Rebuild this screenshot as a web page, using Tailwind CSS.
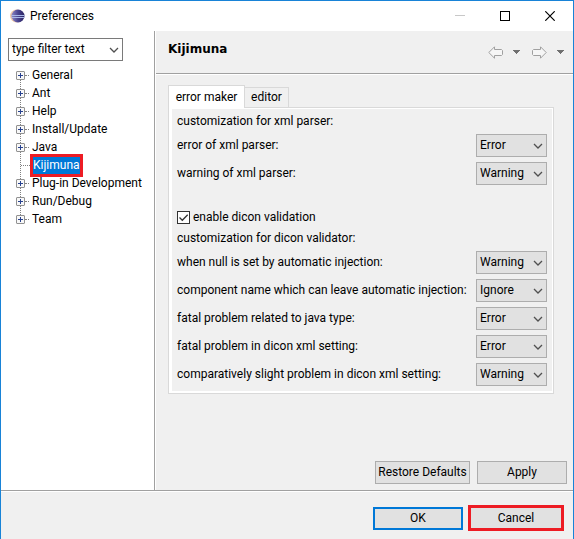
<!DOCTYPE html>
<html lang="en">
<head>
<meta charset="utf-8">
<meta name="viewport" content="width=device-width, initial-scale=1">
<title>Preferences</title>
<script src="https://cdn.jsdelivr.net/npm/@tailwindcss/browser@4"></script>
</head>
<body class="min-h-screen flex flex-col border-x border-t border-[#1883d7] bg-[#f0f0f0] font-['Roboto','Noto_Sans',sans-serif] text-[12px] leading-[15px] text-black">
<svg class="hidden">
  <symbol id="chevron" viewBox="0 0 10 6"><path d="M1 1l4 4 4-4" fill="none" stroke="#505050" stroke-width="1.3"/></symbol>
  <symbol id="plus" viewBox="0 0 9 9"><rect x=".5" y=".5" width="8" height="8" rx=".5" fill="#f8f8f8" stroke="#919191"/><path d="M2 4.5h5M4.5 2v5" stroke="#27418f"/></symbol>
  <symbol id="arrow" viewBox="0 0 15 13"><path d="M.8 6.5L6.500 .8V3.500H13.500L14.500 4.500V8.500L13.500 9.500H6.500V12.200Z" fill="#f6f6f6" stroke="#a0a0a0"/></symbol>
  <symbol id="caret" viewBox="0 0 7 4"><path d="M0 0h7v1H6v1H5v1H4v1H3V3H2V2H1V1H0z" fill="#707070"/></symbol>
</svg>

<header class="flex h-[30px] items-center bg-white pl-[9px]">
  <svg class="size-[15px] shrink-0" viewBox="0 0 15 15">
    <defs><linearGradient id="globe" x1="0" x2="1"><stop offset="0" stop-color="#8c86c4"/><stop offset=".5" stop-color="#4a4490"/><stop offset="1" stop-color="#2c2460"/></linearGradient></defs>
    <circle cx="6.500" cy="7" r="6.500" fill="#f0c8a8"/>
    <circle cx="8" cy="7" r="6.500" fill="url(#globe)"/>
    <path d="M1.500 6.500h13M1.500 8.500h13" stroke="#a8b8e8"/>
  </svg>
  <h1 class="ml-[5px] flex-1">Preferences</h1>
  <button type="button" aria-label="Minimize" class="flex w-[45px] justify-center"><svg class="size-[10px]" viewBox="0 0 10 10"><path d="M0 4.500h10" stroke="#c8c8c8"/></svg></button>
  <button type="button" aria-label="Maximize" class="flex w-[45px] justify-center"><svg class="size-[10px]" viewBox="0 0 10 10"><rect x=".5" y=".5" width="9" height="9" fill="none" stroke="#000"/></svg></button>
  <button type="button" aria-label="Close" class="flex w-[46px] justify-center"><svg class="size-[10px]" viewBox="0 0 10 10"><path d="M.3.3l9.400 9.400M9.700.3L.3 9.700" stroke="#000" stroke-width="1.200"/></svg></button>
</header>

<div class="flex flex-1 border-b border-[#a0a0a0]">
  <nav class="w-[153px] shrink-0 bg-white pt-[7px] pl-[7px]">
    <div class="flex h-[23px] w-[115px] items-center border border-[#7a7a7a]">
      <input type="text" aria-label="Filter" value="type filter text" class="min-w-0 flex-1 bg-transparent pl-[3px] outline-none">
      <button type="button" aria-label="Show filters" class="px-[3px]"><svg class="h-[6px] w-[10px]"><use href="#chevron"/></svg></button>
    </div>
    <ul class="relative mt-[5px] pl-[8px] before:absolute before:top-[10px] before:bottom-[9px] before:left-[12px] before:border-l before:border-dotted before:border-[#808080]">
      <li class="flex h-[18px] items-center"><svg class="relative size-[9px]"><use href="#plus"/></svg><i class="mr-[3px] w-[4px] border-t border-dotted border-[#808080]"></i><a href="#">General</a></li>
      <li class="flex h-[18px] items-center"><svg class="relative size-[9px]"><use href="#plus"/></svg><i class="mr-[3px] w-[4px] border-t border-dotted border-[#808080]"></i><a href="#">Ant</a></li>
      <li class="flex h-[18px] items-center"><svg class="relative size-[9px]"><use href="#plus"/></svg><i class="mr-[3px] w-[4px] border-t border-dotted border-[#808080]"></i><a href="#">Help</a></li>
      <li class="flex h-[18px] items-center"><svg class="relative size-[9px]"><use href="#plus"/></svg><i class="mr-[3px] w-[4px] border-t border-dotted border-[#808080]"></i><a href="#">Install/Update</a></li>
      <li class="flex h-[18px] items-center"><svg class="relative size-[9px]"><use href="#plus"/></svg><i class="mr-[3px] w-[4px] border-t border-dotted border-[#808080]"></i><a href="#">Java</a></li>
      <li class="flex h-[18px] items-center"><i class="ml-[5px] w-[9px] border-t border-dotted border-[#808080]"></i><a href="#" aria-current="page" class="relative border-3 border-[#ed1c24] bg-[#0078d7] py-px text-white">Kijimuna</a></li>
      <li class="flex h-[18px] items-center"><svg class="relative size-[9px]"><use href="#plus"/></svg><i class="mr-[3px] w-[4px] border-t border-dotted border-[#808080]"></i><a href="#" class="whitespace-nowrap">Plug-in Development</a></li>
      <li class="flex h-[18px] items-center"><svg class="relative size-[9px]"><use href="#plus"/></svg><i class="mr-[3px] w-[4px] border-t border-dotted border-[#808080]"></i><a href="#">Run/Debug</a></li>
      <li class="flex h-[18px] items-center"><svg class="relative size-[9px]"><use href="#plus"/></svg><i class="mr-[3px] w-[4px] border-t border-dotted border-[#808080]"></i><a href="#">Team</a></li>
    </ul>
  </nav>

  <main class="flex min-w-0 flex-1 flex-col border-l border-[#a0a0a0]">
    <div class="flex flex-1 flex-col border-l border-white">
      <div class="flex h-[43px] items-center border-b border-[#a0a0a0] pr-[9px] pl-[12px]">
        <h2 class="flex-1 pb-[5px] font-['DejaVu_Sans','Noto_Sans',sans-serif] text-[12px] font-bold">Kijimuna</h2>
        <button type="button" aria-label="Back"><svg class="h-[13px] w-[15px]"><use href="#arrow"/></svg></button>
        <button type="button" aria-label="Back history" class="ml-[10px]"><svg class="h-[4px] w-[7px]"><use href="#caret"/></svg></button>
        <button type="button" aria-label="Forward" class="ml-[12px]"><svg class="h-[13px] w-[15px] -scale-x-100"><use href="#arrow"/></svg></button>
        <button type="button" aria-label="Forward history" class="ml-[10px]"><svg class="h-[4px] w-[7px]"><use href="#caret"/></svg></button>
      </div>
      <div class="flex flex-1 flex-col border-t border-white pt-[10px] pr-[6px] pb-[6px] pl-[12px]">
        <div role="tablist" class="flex items-end">
          <button type="button" role="tab" aria-selected="true" class="relative -mb-px h-[23px] w-[77px] border border-b-0 border-[#d9d9d9] bg-white">error maker</button>
          <button type="button" role="tab" aria-selected="false" class="h-[20px] w-[44px] border border-b-0 border-l-0 border-[#d9d9d9]">editor</button>
        </div>
        <form role="tabpanel" class="mr-[13px] border border-[#d9d9d9] bg-white pt-px pr-px pb-[2px] pl-[3px]">
          <div class="flex flex-col gap-[5px] bg-[#f0f0f0] p-[5px]">
            <p>customization for xml parser:</p>
            <div class="flex items-center justify-between"><label for="s1">error of xml parser:</label><div class="relative flex items-center"><select id="s1" class="h-[23px] w-[71px] appearance-none border border-[#adadad] bg-[#e1e1e1] pl-[3px]"><option>Error</option><option>Warning</option><option>Ignore</option></select><svg class="pointer-events-none absolute right-[4px] h-[6px] w-[10px]"><use href="#chevron"/></svg></div></div>
            <div class="flex items-center justify-between"><label for="s2">warning of xml parser:</label><div class="relative flex items-center"><select id="s2" class="h-[23px] w-[71px] appearance-none border border-[#adadad] bg-[#e1e1e1] pl-[3px]"><option>Warning</option><option>Error</option><option>Ignore</option></select><svg class="pointer-events-none absolute right-[4px] h-[6px] w-[10px]"><use href="#chevron"/></svg></div></div>
            <label class="mt-[20px] flex h-[16px] items-center gap-[3px] pb-px"><span class="relative flex"><input type="checkbox" checked class="peer size-[13px] appearance-none border border-[#333] bg-white"><svg class="pointer-events-none absolute inset-0 hidden size-[13px] peer-checked:block" viewBox="0 0 13 13"><path d="M2.500 6.500l2.800 2.800 5.400-5.600" fill="none" stroke="#333" stroke-width="1.300"/></svg></span>enable dicon validation</label>
            <p>customization for dicon validator:</p>
            <div class="flex items-center justify-between"><label for="s3">when null is set by automatic injection:</label><div class="relative flex items-center"><select id="s3" class="h-[23px] w-[71px] appearance-none border border-[#adadad] bg-[#e1e1e1] pl-[3px]"><option>Warning</option><option>Error</option><option>Ignore</option></select><svg class="pointer-events-none absolute right-[4px] h-[6px] w-[10px]"><use href="#chevron"/></svg></div></div>
            <div class="flex items-center justify-between"><label for="s4" class="whitespace-nowrap">component name which can leave automatic injection:</label><div class="relative flex items-center"><select id="s4" class="h-[23px] w-[71px] appearance-none border border-[#adadad] bg-[#e1e1e1] pl-[3px]"><option>Ignore</option><option>Warning</option><option>Error</option></select><svg class="pointer-events-none absolute right-[4px] h-[6px] w-[10px]"><use href="#chevron"/></svg></div></div>
            <div class="flex items-center justify-between"><label for="s5">fatal problem related to java type:</label><div class="relative flex items-center"><select id="s5" class="h-[23px] w-[71px] appearance-none border border-[#adadad] bg-[#e1e1e1] pl-[3px]"><option>Error</option><option>Warning</option><option>Ignore</option></select><svg class="pointer-events-none absolute right-[4px] h-[6px] w-[10px]"><use href="#chevron"/></svg></div></div>
            <div class="flex items-center justify-between"><label for="s6">fatal problem in dicon xml setting:</label><div class="relative flex items-center"><select id="s6" class="h-[23px] w-[71px] appearance-none border border-[#adadad] bg-[#e1e1e1] pl-[3px]"><option>Error</option><option>Warning</option><option>Ignore</option></select><svg class="pointer-events-none absolute right-[4px] h-[6px] w-[10px]"><use href="#chevron"/></svg></div></div>
            <div class="flex items-center justify-between"><label for="s7">comparatively slight problem in dicon xml setting:</label><div class="relative flex items-center"><select id="s7" class="h-[23px] w-[71px] appearance-none border border-[#adadad] bg-[#e1e1e1] pl-[3px]"><option>Warning</option><option>Error</option><option>Ignore</option></select><svg class="pointer-events-none absolute right-[4px] h-[6px] w-[10px]"><use href="#chevron"/></svg></div></div>
          </div>
        </form>
        <div class="mt-auto flex justify-end gap-[7px]">
          <button type="button" class="h-[23px] w-[95px] border border-[#adadad] bg-[#e1e1e1] whitespace-nowrap">Restore Defaults</button>
          <button type="button" class="h-[23px] w-[90px] border border-[#adadad] bg-[#e1e1e1]">Apply</button>
        </div>
      </div>
    </div>
  </main>
</div>

<footer class="flex h-[48px] items-center justify-end gap-[5px] border-t border-white pt-[5px] pr-[9px]">
  <button type="button" class="h-[23px] w-[90px] border-2 border-[#0078d7] bg-[#e1e1e1]">OK</button>
  <button type="button" class="h-[26px] w-[96px] border-3 border-[#ed1c24] bg-[#e1e1e1]">Cancel</button>
</footer>
</body>
</html>
